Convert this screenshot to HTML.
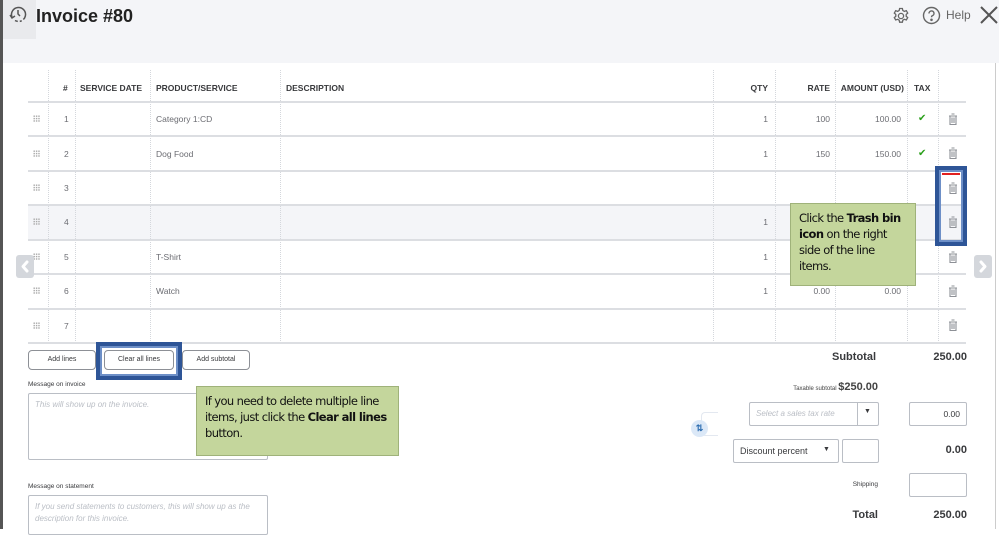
<!DOCTYPE html>
<html><head><meta charset="utf-8"><style>
*{box-sizing:border-box;margin:0;padding:0}
body{width:999px;height:529px;overflow:hidden;background:#fff;font-family:"Liberation Sans",sans-serif;color:#393a3d;position:relative}
.a{position:absolute}
.hdr{left:0;top:0;width:999px;height:63px;background:#f4f5f8}
.vl{position:absolute;top:70px;height:273px;border-left:1px dotted #d4d7dc}
.hl{position:absolute;left:28px;width:938px;height:2px;background:#dcdee2}
.th{position:absolute;top:83px;font-size:8.5px;font-weight:bold;color:#393a3d}
.td{position:absolute;font-size:8.5px;color:#6b6c72}
.r{text-align:right}
.btn{position:absolute;top:350px;height:20px;border:1px solid #8d9096;border-radius:4px;font-size:7px;text-align:center;line-height:18px;color:#393a3d;background:#fff}
.call{position:absolute;background:#c4d69c;border:1px solid #9fb27a;font-family:"DejaVu Sans","Liberation Sans",sans-serif;color:#111;letter-spacing:-0.6px}
.hb{position:absolute;border:4px solid #2e5597;box-shadow:inset 0 0 0 2px #6d8fc7}
.box{position:absolute;border:1px solid #babec5;border-radius:2px;background:#fff}
.grip{position:absolute;left:33px;width:7px;height:7px;background-image:radial-gradient(#aaa 0.7px,transparent 0.8px);background-size:2.4px 2.4px}
.trash{position:absolute;left:948px;width:10px;height:12px}
.arr{position:absolute;top:255px;width:18px;height:23px;background:#d4d7dc;border-radius:3px}
</style></head><body>
<div class="a hdr"></div>
<div class="a" style="left:0;top:0;width:3px;height:529px;background:#555"></div>
<div class="a" style="left:3px;top:0;width:33px;height:39px;background:#e9eaed"></div>
<svg class="a" style="left:9px;top:5px" width="18" height="18" viewBox="0 0 18 18" fill="none" stroke="#555" stroke-width="1.5"><path d="M3 12A7 7 0 1 1 6 15.5" stroke-dasharray="30 2 2 2"/><path d="M9 5v4l2 2"/><path d="M1 10l2 3 3-2"/></svg>
<div class="a" style="left:36px;top:6px;font-size:18px;font-weight:bold;color:#222">Invoice #80</div>
<svg class="a" style="left:892px;top:7px" width="18" height="18" viewBox="0 0 18 18" fill="none" stroke="#666" stroke-width="1.3"><circle cx="9" cy="9" r="2.6"/><path d="M7.6 1.5h2.8l.4 2 1.6.9 1.9-.7 1.4 2.4-1.5 1.3v1.9l1.5 1.3-1.4 2.4-1.9-.7-1.6.9-.4 2H7.6l-.4-2-1.6-.9-1.9.7-1.4-2.4 1.5-1.3V7.4L2.3 6.1l1.4-2.4 1.9.7 1.6-.9z"/></svg>
<svg class="a" style="left:922px;top:6px" width="19" height="19" viewBox="0 0 19 19" fill="none" stroke="#666" stroke-width="1.4"><circle cx="9.5" cy="9.5" r="8"/><path d="M7 7.5a2.5 2.5 0 1 1 3.2 2.3c-.6.3-.7.7-.7 1.5"/><circle cx="9.5" cy="13.8" r=".6" fill="#666"/></svg>
<div class="a" style="left:946px;top:8px;font-size:12px;color:#666">Help</div>
<svg class="a" style="left:979px;top:5px" width="20" height="20" viewBox="0 0 20 20" stroke="#555" stroke-width="2"><path d="M2 2l16 16M18 2L2 18"/></svg>
<div class="a" style="left:995px;top:63px;width:1px;height:466px;background:#ccc"></div>

<div class="a" style="left:28px;top:205px;width:938px;height:35px;background:#f4f5f8"></div>
<div class="vl" style="left:48px"></div><div class="vl" style="left:75px"></div><div class="vl" style="left:150px"></div><div class="vl" style="left:280px"></div><div class="vl" style="left:713px"></div><div class="vl" style="left:775px"></div><div class="vl" style="left:835px"></div><div class="vl" style="left:907px"></div><div class="vl" style="left:938px"></div>
<div class="hl" style="top:101px"></div><div class="hl" style="top:135px"></div><div class="hl" style="top:170px"></div><div class="hl" style="top:204px"></div><div class="hl" style="top:239px"></div><div class="hl" style="top:273px"></div><div class="hl" style="top:308px"></div><div class="hl" style="top:342px"></div>

<div class="th" style="left:63px">#</div>
<div class="th" style="left:80px">SERVICE DATE</div>
<div class="th" style="left:156px">PRODUCT/SERVICE</div>
<div class="th" style="left:286px">DESCRIPTION</div>
<div class="th r" style="left:720px;width:48px">QTY</div>
<div class="th r" style="left:780px;width:50px">RATE</div>
<div class="th r" style="left:838px;width:66px">AMOUNT (USD)</div>
<div class="th" style="left:914px">TAX</div>

<div class="grip" style="top:115px"></div><div class="grip" style="top:150px"></div><div class="grip" style="top:184px"></div><div class="grip" style="top:218px"></div><div class="grip" style="top:253px"></div><div class="grip" style="top:287px"></div><div class="grip" style="top:322px"></div>
<div class="td" style="left:64px;top:114px">1</div><div class="td" style="left:64px;top:149px">2</div><div class="td" style="left:64px;top:183px">3</div><div class="td" style="left:64px;top:217px">4</div><div class="td" style="left:64px;top:252px">5</div><div class="td" style="left:64px;top:286px">6</div><div class="td" style="left:64px;top:321px">7</div>
<div class="td" style="left:156px;top:114px">Category 1:CD</div><div class="td" style="left:156px;top:149px">Dog Food</div><div class="td" style="left:156px;top:252px">T-Shirt</div><div class="td" style="left:156px;top:286px">Watch</div>
<div class="td r" style="left:720px;width:48px;top:114px">1</div><div class="td r" style="left:720px;width:48px;top:149px">1</div><div class="td r" style="left:720px;width:48px;top:217px">1</div><div class="td r" style="left:720px;width:48px;top:252px">1</div><div class="td r" style="left:720px;width:48px;top:286px">1</div>
<div class="td r" style="left:780px;width:50px;top:114px">100</div><div class="td r" style="left:780px;width:50px;top:149px">150</div><div class="td r" style="left:780px;width:50px;top:286px">0.00</div>
<div class="td r" style="left:838px;width:63px;top:114px">100.00</div><div class="td r" style="left:838px;width:63px;top:149px">150.00</div><div class="td r" style="left:838px;width:63px;top:286px">0.00</div>
<div class="td" style="left:918px;top:113px;color:#2ca01c;font-size:10px">✔</div><div class="td" style="left:918px;top:148px;color:#2ca01c;font-size:10px">✔</div>

<svg width="0" height="0" style="position:absolute"><defs><g id="tr" fill="none" stroke="#8d9096" stroke-width="1.1"><path d="M3.5 1h3M1 3h8M2 3v8.5h6V3M4 4.5v5.5M6 4.5v5.5"/></g></defs></svg>
<svg class="trash" style="top:113px"><use href="#tr"/></svg><svg class="trash" style="top:147px"><use href="#tr"/></svg><svg class="trash" style="top:182px"><use href="#tr"/></svg><svg class="trash" style="top:216px"><use href="#tr"/></svg><svg class="trash" style="top:251px"><use href="#tr"/></svg><svg class="trash" style="top:285px"><use href="#tr"/></svg><svg class="trash" style="top:319px"><use href="#tr"/></svg>

<div class="arr" style="left:16px"><svg width="18" height="23" fill="none" stroke="#fff" stroke-width="3" stroke-linecap="round" stroke-linejoin="round"><path d="M11 7l-4 4.5 4 4.5"/></svg></div>
<div class="arr" style="left:974px"><svg width="18" height="23" fill="none" stroke="#fff" stroke-width="3" stroke-linecap="round" stroke-linejoin="round"><path d="M7 7l4 4.5-4 4.5"/></svg></div>

<div class="hb" style="left:935px;top:166px;width:32px;height:80px"></div>
<div class="a" style="left:942px;top:173px;width:18px;height:2px;background:#e02020"></div>
<div class="call" style="left:790px;top:203px;width:126px;height:83px;padding:6px 8px;font-size:11.5px;line-height:16px">Click the <b>Trash bin icon</b> on the right side of the line items.</div>

<div class="btn" style="left:28px;width:68px">Add lines</div>
<div class="btn" style="left:104px;width:70px">Clear all lines</div>
<div class="btn" style="left:182px;width:68px">Add subtotal</div>
<div class="hb" style="left:96px;top:342px;width:86px;height:38px"></div>

<div class="a" style="left:28px;top:381px;font-size:6.5px">Message on invoice</div>
<div class="box" style="left:28px;top:393px;width:240px;height:67px;padding:6px;font-size:8px;font-style:italic;color:#babec5">This will show up on the invoice.</div>
<div class="call" style="left:196px;top:386px;width:203px;height:70px;padding:6px 8px;font-size:11.5px;line-height:16px">If you need to delete multiple line items, just click the <b>Clear all lines</b> button.</div>
<div class="a" style="left:28px;top:483px;font-size:6.5px">Message on statement</div>
<div class="box" style="left:28px;top:495px;width:240px;height:40px;padding:5px 6px;font-size:8px;font-style:italic;color:#babec5;line-height:12px">If you send statements to customers, this will show up as the description for this invoice.</div>

<div class="a r" style="left:780px;top:351px;width:96px;font-size:11px;font-weight:bold;color:#393a3d">Subtotal</div>
<div class="a r" style="left:900px;top:351px;width:67px;font-size:11px;font-weight:bold">250.00</div>
<div class="a r" style="left:760px;top:381px;width:118px;font-size:6px;color:#444"><span>Taxable subtotal</span> <b style="font-size:11px">$250.00</b></div>
<div class="box" style="left:749px;top:402px;width:130px;height:24px;padding:6px;font-size:8px;font-style:italic;color:#babec5">Select a sales tax rate</div>
<div class="a" style="left:857px;top:403px;width:1px;height:22px;background:#babec5"></div>
<div class="a" style="left:864px;top:408px;font-size:7px">▼</div>
<div class="box r" style="left:909px;top:402px;width:58px;height:24px;padding:6px;font-size:8.5px">0.00</div>
<div class="a" style="left:701px;top:412px;width:17px;height:24px;border:1px solid #e3e8f0;border-right:none;border-radius:4px 0 0 4px"></div>
<div class="a" style="left:691px;top:420px;width:17px;height:17px;border-radius:50%;background:#dbe8f7;color:#2b6cb0;font-size:9px;font-weight:bold;text-align:center;line-height:17px">⇅</div>
<div class="box" style="left:733px;top:439px;width:106px;height:24px;padding:6px;font-size:9px;color:#393a3d">Discount percent</div>
<div class="a" style="left:823px;top:446px;font-size:7px">▼</div>
<div class="box" style="left:842px;top:439px;width:37px;height:24px"></div>
<div class="a r" style="left:900px;top:444px;width:67px;font-size:11px;font-weight:bold">0.00</div>
<div class="a r" style="left:800px;top:481px;width:78px;font-size:6.5px">Shipping</div>
<div class="box" style="left:909px;top:473px;width:58px;height:24px"></div>
<div class="a r" style="left:780px;top:509px;width:98px;font-size:11px;font-weight:bold">Total</div>
<div class="a r" style="left:900px;top:509px;width:67px;font-size:11px;font-weight:bold">250.00</div>
</body></html>
